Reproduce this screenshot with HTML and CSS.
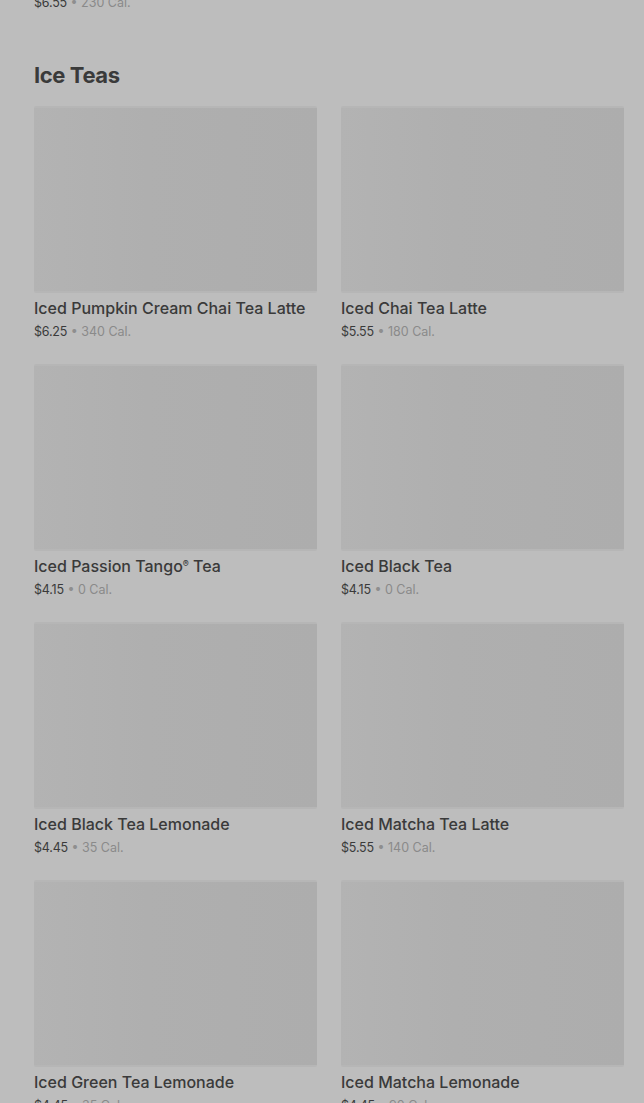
FILE: index.html
```html
<!DOCTYPE html>
<html lang="en">
<head>
    <meta charset="UTF-8">
    <meta name="viewport" content="width=device-width, initial-scale=1.0">
    <title>Ice Teas</title>
    <link rel="stylesheet" href="styles.css">
</head>
<body>
    <div class="menu">
        <p class="meta prev-meta"><span class="price">$6.55</span> • <span class="cal">230 Cal.</span></p>

        <section class="category">
            <h2 class="category-title">Ice Teas</h2>
            <div class="grid">
                <div class="item">
                    <div class="item-pic"></div>
                    <h3 class="item-name">Iced Pumpkin Cream Chai Tea Latte</h3>
                    <p class="meta"><span class="price">$6.25</span> • <span class="cal">340 Cal.</span></p>
                </div>
                <div class="item">
                    <div class="item-pic"></div>
                    <h3 class="item-name">Iced Chai Tea Latte</h3>
                    <p class="meta"><span class="price">$5.55</span> • <span class="cal">180 Cal.</span></p>
                </div>
                <div class="item">
                    <div class="item-pic"></div>
                    <h3 class="item-name">Iced Passion Tango<span class="reg">®</span> Tea</h3>
                    <p class="meta"><span class="price">$4.15</span> • <span class="cal">0 Cal.</span></p>
                </div>
                <div class="item">
                    <div class="item-pic"></div>
                    <h3 class="item-name">Iced Black Tea</h3>
                    <p class="meta"><span class="price">$4.15</span> • <span class="cal">0 Cal.</span></p>
                </div>
                <div class="item">
                    <div class="item-pic"></div>
                    <h3 class="item-name">Iced Black Tea Lemonade</h3>
                    <p class="meta"><span class="price">$4.45</span> • <span class="cal">35 Cal.</span></p>
                </div>
                <div class="item">
                    <div class="item-pic"></div>
                    <h3 class="item-name">Iced Matcha Tea Latte</h3>
                    <p class="meta"><span class="price">$5.55</span> • <span class="cal">140 Cal.</span></p>
                </div>
                <div class="item">
                    <div class="item-pic"></div>
                    <h3 class="item-name">Iced Green Tea Lemonade</h3>
                    <p class="meta"><span class="price">$4.45</span> • <span class="cal">35 Cal.</span></p>
                </div>
                <div class="item">
                    <div class="item-pic"></div>
                    <h3 class="item-name">Iced Matcha Lemonade</h3>
                    <p class="meta"><span class="price">$4.45</span> • <span class="cal">90 Cal.</span></p>
                </div>
            </div>
        </section>
    </div>
</body>
</html>
```

FILE: styles.css
```css
body {
    font-family: 'Inter', 'Roboto', sans-serif;
    margin: 0;
    padding: 0;
    background-color: #bdbdbd;
    overflow: hidden;
}

.menu {
    padding: 0 20px 0 34px;
}

.meta {
    margin: 0;
    font-size: 12.5px;
    line-height: 20px;
    color: #8e8e8e;
}

.meta .price {
    color: #3a3a3a;
    letter-spacing: -0.2px;
}

.meta .cal {
    color: #8a8a8a;
}

.prev-meta {
    margin-top: -7px;
}

.category-title {
    margin: 47px 0 16px;
    font-size: 22px;
    line-height: 30px;
    font-weight: 700;
    letter-spacing: -0.4px;
    color: #3a3a3a;
}

.grid {
    display: grid;
    grid-template-columns: 1fr 1fr;
    column-gap: 24px;
    row-gap: 22px;
}

.item-pic {
    height: 187px;
    background: linear-gradient(90deg, #b3b3b3 0%, #afafaf 40%, #adadad 100%);
    border-top: 2px solid #b6b6b6;
    border-bottom: 2px solid #b6b6b6;
    box-sizing: border-box;
    border-radius: 2px;
}

.item-name {
    margin: 5px 0 0;
    font-size: 16px;
    line-height: 20px;
    font-weight: 500;
    color: #3a3a3a;
    white-space: nowrap;
}

.item-name .reg {
    font-size: 9px;
    line-height: 0;
    vertical-align: 5px;
}

.item .meta {
    margin-top: 4px;
}
```
